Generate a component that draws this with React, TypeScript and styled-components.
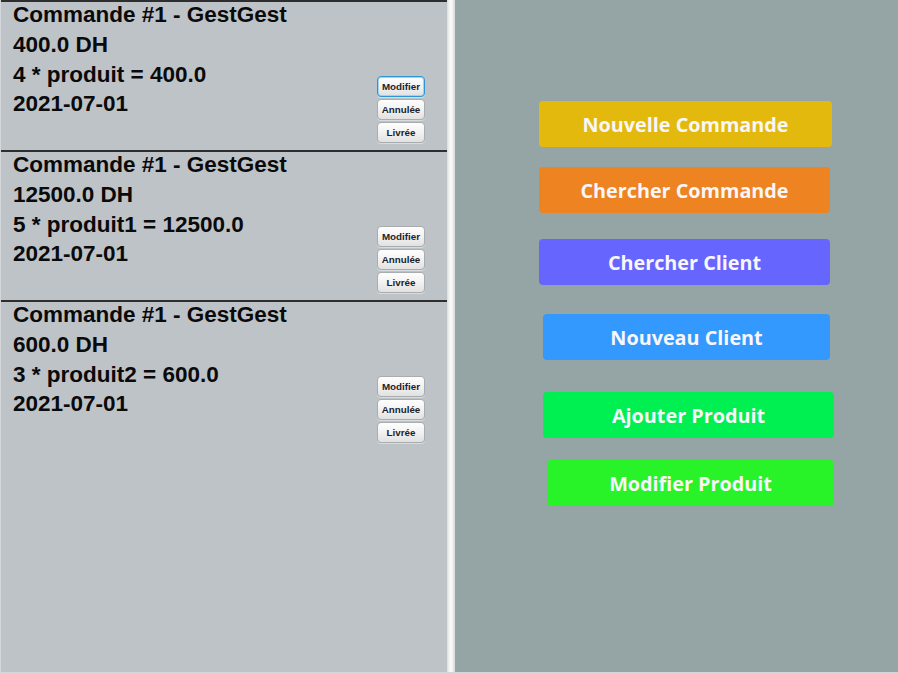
import React from "react";
import styled, { createGlobalStyle, css } from "styled-components";

const Global = createGlobalStyle`
  html, body { margin: 0; padding: 0; }
  body { width: 898px; height: 673px; overflow: hidden; background: #bdc3c7; }
  #root { width: 898px; height: 673px; }
`;

const Window = styled.div`
  width: 898px;
  height: 673px;
  box-sizing: border-box;
  display: flex;
  border-left: 1px solid #d3d7da;
  border-bottom: 1px solid #d3d7da;
`;

const LeftPane = styled.div`
  width: 446px;
  flex: none;
  background: #bdc3c7;
  display: flex;
  flex-direction: column;
`;

const Splitter = styled.div`
  width: 8px;
  flex: none;
  background: linear-gradient(to right, #d9dbdc 0%, #f1f1f1 25%, #fbfbfb 50%, #ececec 75%, #d4d6d7 100%);
`;

const RightPane = styled.div`
  flex: 1;
  background: #95a5a6;
  display: flex;
  flex-direction: column;
  padding-top: 101px;
`;

const Card = styled.div`
  height: 150px;
  box-sizing: border-box;
  border-top: 2px solid #2e2e2e;
  display: flex;
  justify-content: space-between;
  padding: 0 22px 0 12px;
`;

const Info = styled.div`
  margin-top: -2px;
  font-family: "Liberation Sans", Arial, sans-serif;
  font-weight: 700;
  font-size: 22.5px;
  line-height: 29.8px;
  color: #0a0a0a;
`;

const Line = styled.div`
  white-space: nowrap;
`;

const Actions = styled.div`
  display: flex;
  flex-direction: column;
  gap: 2px;
  padding-top: 74px;
`;

const SmallButton = styled.button<{ $focused?: boolean }>`
  width: 48px;
  height: 21px;
  box-sizing: border-box;
  padding: 0;
  border-radius: 4px;
  border: 1px solid #a9adb0;
  background: linear-gradient(to bottom, #fefefe 0%, #f2f2f2 50%, #e1e1e1 100%);
  box-shadow: 0 1px 0 #d8dcde;
  font-family: "Liberation Sans", Arial, sans-serif;
  font-weight: 700;
  font-size: 9.8px;
  color: #1c1f2a;
  cursor: pointer;
  ${(p) =>
    p.$focused &&
    css`
      border: 1px solid #2b97d6;
      box-shadow: inset 0 0 0 1px #9fd3f2, 0 1px 0 #d8dcde;
    `}
`;

const ActionButton = styled.button<{ $bg: string; $left: number; $w: number; $top: number }>`
  margin-top: ${(p) => p.$top}px;
  margin-left: ${(p) => p.$left}px;
  width: ${(p) => p.$w}px;
  height: 46px;
  flex: none;
  border: none;
  border-radius: 4px;
  background: ${(p) => p.$bg};
  color: #f8f6f9;
  font-family: "Open Sans", "Noto Sans", sans-serif;
  font-weight: 700;
  font-size: 19.8px;
  padding: 0;
  cursor: pointer;
`;

const orders = [
  { total: "400.0 DH", detail: "4 * produit = 400.0", date: "2021-07-01" },
  { total: "12500.0 DH", detail: "5 * produit1 = 12500.0", date: "2021-07-01" },
  { total: "600.0 DH", detail: "3 * produit2 = 600.0", date: "2021-07-01" },
];

const actions = [
  { label: "Nouvelle Commande", bg: "#e4b90d", left: 84, w: 293, top: 0 },
  { label: "Chercher Commande", bg: "#ee8322", left: 84, w: 291, top: 20 },
  { label: "Chercher Client", bg: "#6666ff", left: 84, w: 291, top: 26 },
  { label: "Nouveau Client", bg: "#3399ff", left: 88, w: 287, top: 29 },
  { label: "Ajouter Produit", bg: "#00ef51", left: 88, w: 291, top: 32 },
  { label: "Modifier Produit", bg: "#27f328", left: 92, w: 287, top: 22 },
];

export default function App() {
  return (
    <>
      <Global />
      <Window>
        <LeftPane>
          {orders.map((o, i) => (
            <Card key={i}>
              <Info>
                <Line>Commande #1 - GestGest</Line>
                <Line>{o.total}</Line>
                <Line>{o.detail}</Line>
                <Line>{o.date}</Line>
              </Info>
              <Actions>
                <SmallButton $focused={i === 0}>Modifier</SmallButton>
                <SmallButton>Annulée</SmallButton>
                <SmallButton>Livrée</SmallButton>
              </Actions>
            </Card>
          ))}
        </LeftPane>
        <Splitter />
        <RightPane>
          {actions.map((a) => (
            <ActionButton key={a.label} $bg={a.bg} $left={a.left} $w={a.w} $top={a.top}>
              {a.label}
            </ActionButton>
          ))}
        </RightPane>
      </Window>
    </>
  );
}
